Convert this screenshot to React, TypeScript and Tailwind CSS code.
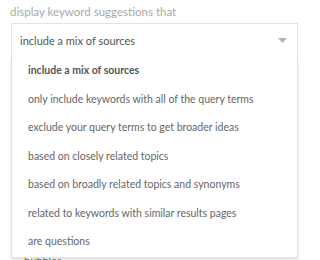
import React from 'react';

const options = [
  'include a mix of sources',
  'only include keywords with all of the query terms',
  'exclude your query terms to get broader ideas',
  'based on closely related topics',
  'based on broadly related topics and synonyms',
  'related to keywords with similar results pages',
  'are questions',
];

export default function App() {
  return (
    <div className="w-[300px] h-[260px] overflow-hidden bg-white font-['Lato',sans-serif]">
      {/* Label */}
      <div className="pl-[10px] pt-[4px] text-[11.5px] leading-[15px] text-[#a8a8a8]">
        display keyword suggestions that
      </div>

      {/* Select */}
      <div className="relative mt-[4px] ml-[11px] mr-[2px]">
        <div className="h-[36px] flex items-center justify-between border border-[#e2e2e2] pl-[8px] pr-[10px] text-[11px] text-[#555]">
          <span>include a mix of sources</span>
          <svg width="9" height="5" viewBox="0 0 9 5" className="mt-[-2px]">
            <path d="M0 0 L9 0 L4.5 5 Z" fill="#b3b3b3" />
          </svg>
        </div>

        {/* Menu */}
        <div className="absolute left-0 right-0 top-[34px] z-10 bg-white border border-t-0 border-[#e2e2e2] shadow-[0_2px_3px_rgba(0,0,0,0.12)]">
          {options.map((o, i) => (
            <div
              key={o}
              className={
                'h-[28.5px] flex items-center pl-[16px] text-[10.5px] ' +
                (i === 0 ? 'font-bold text-[#555]' : 'text-[#666]')
              }
            >
              {o}
            </div>
          ))}
        </div>
      </div>

      {/* Content under the menu */}
      <div className="mt-[194px] ml-[24px] text-[11px] text-[#666]">bubbles</div>
    </div>
  );
}
